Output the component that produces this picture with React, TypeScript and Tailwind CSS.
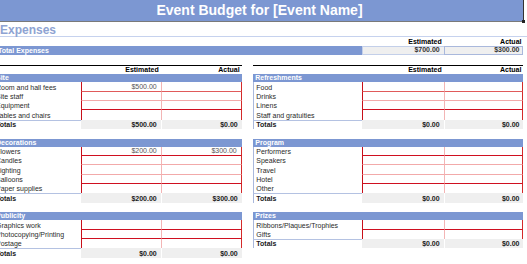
import clsx from 'clsx'

type Line = 'd' | 'm' | 'l'
type Item = { label: string; est?: string; act?: string }
type Section = { title: string; items: Item[]; lines: Line[]; totals: [string, string] }

const lineColor: Record<Line, string> = {
  d: 'border-b-[#cf1020]',
  m: 'border-b-[#e05a5a]',
  l: 'border-b-[#f2aaaa]',
}

const leftSections: Section[] = [
  {
    title: 'Site',
    items: [
      { label: 'Room and hall fees', est: '$500.00' },
      { label: 'Site staff' },
      { label: 'Equipment' },
      { label: 'Tables and chairs' },
    ],
    lines: ['m', 'l', 'd'],
    totals: ['$500.00', '$0.00'],
  },
  {
    title: 'Decorations',
    items: [
      { label: 'Flowers', est: '$200.00', act: '$300.00' },
      { label: 'Candles' },
      { label: 'Lighting' },
      { label: 'Balloons' },
      { label: 'Paper supplies' },
    ],
    lines: ['d', 'l', 'l', 'd'],
    totals: ['$200.00', '$300.00'],
  },
  {
    title: 'Publicity',
    items: [{ label: 'Graphics work' }, { label: 'Photocopying/Printing' }, { label: 'Postage' }],
    lines: ['d', 'd'],
    totals: ['$0.00', '$0.00'],
  },
]

const rightSections: Section[] = [
  {
    title: 'Refreshments',
    items: [{ label: 'Food' }, { label: 'Drinks' }, { label: 'Linens' }, { label: 'Staff and gratuities' }],
    lines: ['m', 'l', 'd'],
    totals: ['$0.00', '$0.00'],
  },
  {
    title: 'Program',
    items: [
      { label: 'Performers' },
      { label: 'Speakers' },
      { label: 'Travel' },
      { label: 'Hotel' },
      { label: 'Other' },
    ],
    lines: ['d', 'l', 'l', 'd'],
    totals: ['$0.00', '$0.00'],
  },
  {
    title: 'Prizes',
    items: [{ label: 'Ribbons/Plaques/Trophies' }, { label: 'Gifts' }],
    lines: ['d'],
    totals: ['$0.00', '$0.00'],
  },
]

// column widths for the two tables
type Cols = { label: string; est: string; act: string; edge: boolean }
const leftCols: Cols = { label: 'w-[86.7px]', est: 'w-[80px]', act: 'w-[81px]', edge: false }
const rightCols: Cols = { label: 'w-[109px]', est: 'w-[81.4px]', act: 'w-[79.8px]', edge: true }

function Cell({ className, children }: { className?: string; children?: React.ReactNode }) {
  return <div className={clsx('flex h-full items-end pb-[1px] leading-none', className)}>{children}</div>
}

function HeaderRow({ cols }: { cols: Cols }) {
  return (
    <div className="flex h-[9.4px] border-t border-black font-bold text-black">
      <Cell className={cols.label} />
      <Cell className={clsx(cols.est, 'justify-end pr-[2px]')}>Estimated</Cell>
      <Cell className={clsx(cols.act, 'justify-end pr-[2px]')}>Actual</Cell>
    </div>
  )
}

function Table({ section, cols }: { section: Section; cols: Cols }) {
  const last = section.items.length - 1
  return (
    <div>
      <Cell className="h-[9.4px] bg-[#7c97d2] pl-[2px] font-bold text-white">{section.title}</Cell>
      {section.items.map((it, i) => (
        <div key={it.label} className="flex h-[9.4px]">
          <Cell
            className={clsx(
              cols.label,
              'pl-[2px] text-[#2a2a2a]',
              cols.edge && 'border-l border-[#a9b8dc] pl-[1px]',
            )}
          >
            {it.label}
          </Cell>
          <Cell
            className={clsx(
              cols.est,
              'justify-end border-l border-l-[#c8101a] pr-[4px] text-[#555]',
              i < last && clsx('border-b', lineColor[section.lines[i]]),
            )}
          >
            {it.est}
          </Cell>
          <Cell
            className={clsx(
              cols.act,
              'justify-end border-x border-l-[#f3b5b5] border-r-[#d42a2a] pr-[4px] text-[#555]',
              i < last && clsx('border-b', lineColor[section.lines[i]]),
            )}
          >
            {it.act}
          </Cell>
        </div>
      ))}
      <div className="flex h-[9.4px] font-bold text-[#1a1a1a]">
        <Cell
          className={clsx(
            cols.label,
            'border-t border-t-[#b4c2e2] pl-[2px]',
            cols.edge && 'border-l border-l-[#a9b8dc] pl-[1px]',
          )}
        >
          Totals
        </Cell>
        <Cell className={clsx(cols.est, 'justify-end bg-[#efefef] pr-[4px]')}>{section.totals[0]}</Cell>
        <Cell className={clsx(cols.act, 'justify-end border-l border-white bg-[#efefef] pr-[4px]')}>
          {section.totals[1]}
        </Cell>
      </div>
    </div>
  )
}

function Stack({ sections, cols }: { sections: Section[]; cols: Cols }) {
  return (
    <div className="flex flex-col">
      <HeaderRow cols={cols} />
      {sections.map((s, i) => (
        <div key={s.title} className={clsx(i > 0 && 'pt-[9.4px]')}>
          <Table section={s} cols={cols} />
        </div>
      ))}
    </div>
  )
}

export default function App() {
  return (
    <div className="h-[264px] w-[527px] overflow-hidden bg-white font-['Liberation_Sans',Arial,sans-serif] text-[7px]">
      <div className="relative flex h-[22px] w-[524px] items-center justify-center border-b border-r border-b-[#7a7a7a] border-r-[#333] bg-[#7c97d2] pr-[4px] text-[14px] font-bold text-white">
        Event Budget for [Event Name]
        <span className="absolute -bottom-[2px] -right-[2px] h-[3px] w-[3px] bg-[#222]" />
      </div>
      <div className="flex h-[14.6px] items-end border-b border-[#c6d2ee] text-[12px] font-bold leading-none text-[#8ea3d2]">
        Expenses
      </div>

      <div className="-ml-[6px]">
        <div className="flex h-[9.4px] font-bold text-black">
          <Cell className="w-[368.3px]" />
          <Cell className="w-[81.4px] justify-end pr-[2px]">Estimated</Cell>
          <Cell className="w-[79.8px] justify-end pr-[2px]">Actual</Cell>
        </div>
        <div className="flex h-[9.4px] font-bold">
          <Cell className="w-[368.3px] bg-[#7c97d2] pl-[4px] text-white">Total Expenses</Cell>
          <Cell className="w-[81.4px] justify-end border border-r-0 border-[#c3cfe9] bg-[#efefef] pr-[4px] text-[#333]">
            $700.00
          </Cell>
          <Cell className="w-[79.8px] justify-end border border-[#a9b8dc] bg-[#efefef] pr-[3px] text-[#333]">
            $300.00
          </Cell>
        </div>
        <div className="h-[9.4px]" />

        <div className="flex gap-[11.6px]">
          <div className="w-[247.7px]">
            <Stack sections={leftSections} cols={leftCols} />
          </div>
          <div className="w-[270.2px]">
            <Stack sections={rightSections} cols={rightCols} />
          </div>
        </div>
      </div>
    </div>
  )
}
